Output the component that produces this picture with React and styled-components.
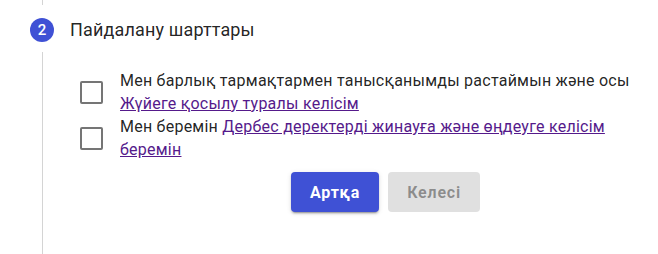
import React from "react";
import styled, { createGlobalStyle } from "styled-components";

const Global = createGlobalStyle`
  html, body { margin: 0; padding: 0; background: #fff; }
  body { font-family: Roboto, "Noto Sans", Arial, sans-serif; color: rgba(0,0,0,0.87); }
  * { box-sizing: border-box; }
`;

const Stepper = styled.div`
  padding-left: 30px;
  width: 658px;
  height: 254px;
  overflow: hidden;
  display: flex;
  flex-direction: column;
`;

const Connector = styled.div`
  margin-left: 12px;
  width: 1px;
  height: 5px;
  background: #d4d4d4;
`;

const StepHeader = styled.div`
  display: flex;
  align-items: center;
  margin-top: 13px;
  height: 24px;
`;

const StepIcon = styled.div`
  width: 24px;
  height: 24px;
  border-radius: 50%;
  background: #3f51d5;
  color: #fff;
  font-size: 15px;
  font-weight: 500;
  display: flex;
  align-items: center;
  justify-content: center;
  flex-shrink: 0;
`;

const StepTitle = styled.div`
  margin-left: 16px;
  font-size: 18px;
  line-height: 24px;
  letter-spacing: 0.15px;
  color: rgba(0,0,0,0.87);
`;

const StepContent = styled.div`
  margin-left: 12px;
  margin-top: 10px;
  flex: 1;
  border-left: 1px solid #d4d4d4;
  padding: 17px 8px 0 27px;
  width: 609px;
`;

const CheckRow = styled.label`
  display: flex;
  align-items: center;
  cursor: pointer;
`;

const CheckBox = styled.span`
  width: 42px;
  height: 42px;
  padding: 12px 9px;
  flex-shrink: 0;
  display: flex;
  align-items: center;
  justify-content: center;
  &::before {
    content: "";
    display: block;
    width: 19px;
    height: 19px;
    border: 2px solid #757575;
    border-radius: 2px;
  }
`;

const Label = styled.span`
  margin-left: 8px;
  font-size: 16px;
  line-height: 23px;
  letter-spacing: 0.24px;
  color: rgba(0,0,0,0.87);
`;

const Link = styled.a`
  color: #551a8b;
  text-decoration: underline;
`;

const Actions = styled.div`
  display: flex;
  justify-content: center;
  gap: 9px;
  padding-left: 58px;
  margin-top: 11px;
`;

const Button = styled.button`
  height: 40px;
  border: none;
  border-radius: 4px;
  font-family: Roboto, Arial, sans-serif;
  font-size: 16px;
  font-weight: 700;
  letter-spacing: 0.8px;
  padding: 0 19px;
  background: ${(p) => (p.$primary ? "#3f51d5" : "#e0e0e0")};
  color: ${(p) => (p.$primary ? "#fff" : "rgba(0,0,0,0.38)")};
  box-shadow: ${(p) =>
    p.$primary
      ? "0 3px 1px -2px rgba(0,0,0,0.2), 0 2px 2px 0 rgba(0,0,0,0.14), 0 1px 5px 0 rgba(0,0,0,0.12)"
      : "none"};
  cursor: ${(p) => (p.disabled ? "default" : "pointer")};
`;

export default function App() {
  return (
    <>
      <Global />
      <Stepper>
        <Connector />
        <StepHeader>
          <StepIcon>2</StepIcon>
          <StepTitle>Пайдалану шарттары</StepTitle>
        </StepHeader>
        <StepContent>
          <CheckRow>
            <CheckBox />
            <Label>
              Мен барлық тармақтармен танысқанымды растаймын және осы{" "}
              <Link href="#">Жүйеге қосылу туралы келісім</Link>
            </Label>
          </CheckRow>
          <CheckRow>
            <CheckBox />
            <Label>
              Мен беремін{" "}
              <Link href="#">Дербес деректерді жинауға және өңдеуге келісім беремін</Link>
            </Label>
          </CheckRow>
          <Actions>
            <Button $primary>Артқа</Button>
            <Button disabled>Келесі</Button>
          </Actions>
        </StepContent>
      </Stepper>
    </>
  );
}
